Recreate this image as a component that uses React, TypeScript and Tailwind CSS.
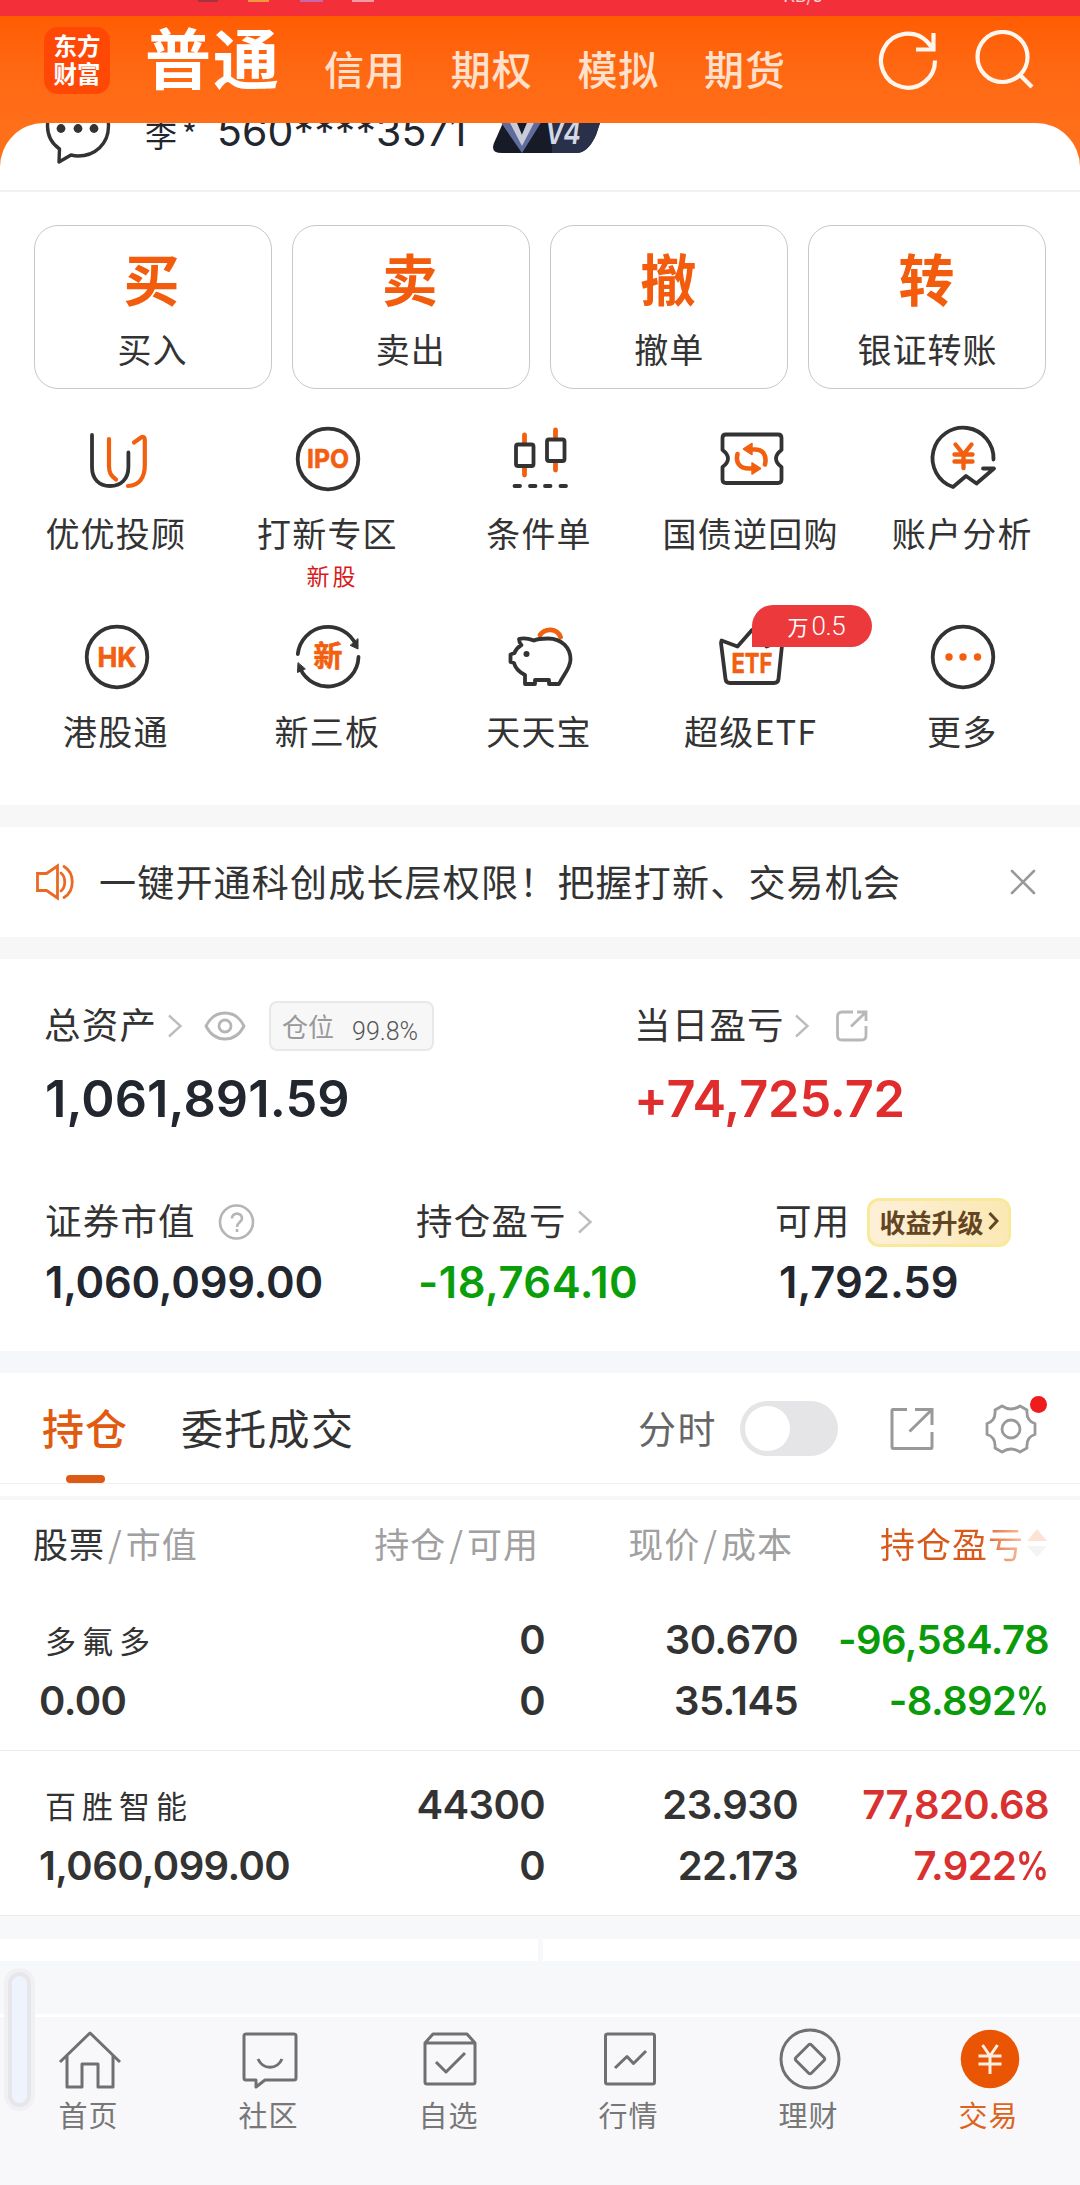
import type { ReactNode } from "react";

const DARK = "#333333";
const ORANGE = "#f2600f";

type childrenProps = {
  children: ReactNode;
};

const MenuIcon = ({ children }: childrenProps) => (
  <svg
    width="72"
    height="72"
    viewBox="0 0 72 72"
    fill="none"
    stroke={DARK}
    strokeWidth="3.8"
    strokeLinecap="round"
    strokeLinejoin="round"
  >
    {children}
  </svg>
);

type iconTextProps = {
  y: number;
  size: number;
  width: number;
  value: string;
};

const IconText = ({ y, size, width, value }: iconTextProps) => (
  <text
    x="36"
    y={y}
    fontSize={size}
    fontWeight="700"
    textAnchor="middle"
    textLength={width}
    lengthAdjust="spacingAndGlyphs"
    fill={ORANGE}
    stroke={ORANGE}
    strokeWidth="0.6"
    fontFamily="Inter, 'Noto Sans CJK SC', sans-serif"
  >
    {value}
  </text>
);

const menuItems = [
  {
    label: "优优投顾",
    icon: (
      <MenuIcon>
        <path d="M11 12V44C11 56 18 63 29 63S47.400 56 47.400 44V29.500" />
        <path d="M28 16V43C28 50 30 53 35 56.500" stroke={ORANGE} strokeWidth="4.2" />
        <path
          d="M53 19.500L60 14.500C62 13.300 63.800 14 63.800 17V42C63.800 55 58 62.500 47 63"
          stroke={ORANGE}
          strokeWidth="4.2"
        />
      </MenuIcon>
    ),
  },
  {
    label: "打新专区",
    note: "新股",
    icon: (
      <MenuIcon>
        <circle cx="36" cy="36" r="30.300" />
        <IconText y={45} size={26} width={42} value="IPO" />
      </MenuIcon>
    ),
  },
  {
    label: "条件单",
    icon: (
      <MenuIcon>
        <g stroke={ORANGE} strokeWidth="4.8">
          <path d="M20.500 12V20M20.500 45V52M51.500 7V14M51.500 40V47" />
        </g>
        <rect x="12" y="21.500" width="17.500" height="21.500" rx="2" />
        <rect x="43" y="16.500" width="17.500" height="21.500" rx="2" />
        <path d="M10.500 63H16M26 63H31.500M41 63H46.500M56.500 63H62" />
      </MenuIcon>
    ),
  },
  {
    label: "国债逆回购",
    icon: (
      <MenuIcon>
        <path d="M10 11.500H62Q65.500 11.500 65.500 15V27Q60 31 60 35.500T65.500 44V56.500Q65.500 60 62 60H10Q6.500 60 6.500 56.500V44Q12 40 12 35.500T6.500 27V15Q6.500 11.500 10 11.500Z" />
        <g stroke={ORANGE} strokeWidth="4.6">
          <path d="M34 26.500H39C47 26.500 51 32 49 41.500" />
          <path d="M38 45.500H33C23 45.500 19.500 39 21.500 31" />
        </g>
        <path d="M27.500 26L36 20.500V31.500Z" fill={ORANGE} stroke={ORANGE} strokeWidth="1.5" />
        <path d="M44.500 45.500L36 40V51Z" fill={ORANGE} stroke={ORANGE} strokeWidth="1.5" />
      </MenuIcon>
    ),
  },
  {
    label: "账户分析",
    icon: (
      <MenuIcon>
        <path d="M66.500 36.500A30.500 30.500 0 1 0 26 64L39 53L49.500 60.500L67 45.500H56" />
        <path
          d="M28.500 21.500L36.500 31.500L44.500 21.500M36.500 31.500V45M27.500 31.500H45.500M27.500 38.500H45.500"
          stroke={ORANGE}
          strokeWidth="4.4"
        />
      </MenuIcon>
    ),
  },
  {
    label: "港股通",
    icon: (
      <MenuIcon>
        <circle cx="36" cy="36" r="30.300" />
        <IconText y={46} size={27} width={39} value="HK" />
      </MenuIcon>
    ),
  },
  {
    label: "新三板",
    icon: (
      <MenuIcon>
        <path d="M5.800 33A30.500 30.500 0 0 1 64 24" />
        <path d="M66.500 36A30.500 30.500 0 0 1 8 47" />
        <path d="M66 18V28L58.500 24.500Z" fill={DARK} strokeWidth="1" />
        <path d="M6 42L5.500 51.500L13 48Z" fill={DARK} strokeWidth="1" />
        <IconText y={46} size={29} width={29} value="新" />
      </MenuIcon>
    ),
  },
  {
    label: "天天宝",
    icon: (
      <MenuIcon>
        <path d="M36 14C41 7 53 6.500 56.500 16" stroke={ORANGE} strokeWidth="4.800" />
        <path
          d="M15 18C21 16 26 18 30 19.500C33 18 36 17.500 44 17.500C58 17.500 66.500 27 66.500 38.500C66.500 47 60 53 55 63H45V59H31V63H21V54C15 51 11 46 10 42L6.500 41V33.500L10.500 32C12 28 14 26 17.500 24C15.500 22 15 20 15 18Z"
          fill="white"
        />
        <circle cx="22.500" cy="33" r="3" fill={DARK} stroke="none" />
      </MenuIcon>
    ),
  },
  {
    label: "超级ETF",
    badge: "0.5",
    icon: (
      <MenuIcon>
        <path d="M5.500 19.500L21.500 25.500L36 9L50.500 25.500L66.500 19.500L62.500 58Q62 62 58 62H14Q10 62 9.500 58L5 22Z" />
        <IconText y={51.500} size={27} width={41} value="ETF" />
      </MenuIcon>
    ),
  },
  {
    label: "更多",
    icon: (
      <MenuIcon>
        <circle cx="36" cy="36" r="30.300" />
        <g fill={ORANGE} stroke="none">
          <circle cx="22" cy="36" r="3.700" />
          <circle cx="36" cy="36" r="3.700" />
          <circle cx="50.500" cy="36" r="3.700" />
        </g>
      </MenuIcon>
    ),
  },
];

const tradeButtons = [
  { mark: "买", label: "买入" },
  { mark: "卖", label: "卖出" },
  { mark: "撤", label: "撤单" },
  { mark: "转", label: "银证转账" },
];

const positions = [
  {
    name: "多氟多",
    value: "0.00",
    hold: "0",
    usable: "0",
    price: "30.670",
    cost: "35.145",
    profit: "-96,584.78",
    rate: "-8.892%",
    color: "text-[#0a9b0a]",
  },
  {
    name: "百胜智能",
    value: "1,060,099.00",
    hold: "44300",
    usable: "0",
    price: "23.930",
    cost: "22.173",
    profit: "77,820.68",
    rate: "7.922%",
    color: "text-[#d93030]",
  },
];

const Chevron = () => (
  <svg width="16" height="26" viewBox="0 0 16 26" fill="none" stroke="#bdbdbd" strokeWidth="2.4">
    <path d="M1 2.500L12.500 13L1 23.500" />
  </svg>
);

const Header = () => (
  <>
    {/* status bar */}
    <div className="flex h-4 items-start overflow-hidden bg-[#f3303a]">
      <div className="ml-[198px] h-[2px] w-[20px] bg-[#a8323c]" />
      <div className="ml-[30px] h-[2px] w-[21px] bg-[#f09a3c]" />
      <div className="ml-[31px] h-[2px] w-[23px] bg-[#c768a8]" />
      <div className="ml-[29px] h-[2px] w-[22px] bg-[#f59aa8]" />
      <span className="-mt-[16px] ml-[409px] text-[18px] leading-5 text-white/80">KB/s</span>
    </div>
    <div className="flex h-[107px] bg-linear-to-b from-[#ff5c02] via-[#ff6812] to-[#ff6e19]">
      <div className="mt-[11px] ml-11 w-[66px] rounded-[14px] bg-[#ff4806] pt-[4px] text-center text-[23.500px] leading-[28px] font-bold text-white h-[67px]">
        东方
        <br />
        财富
      </div>
      <span className="mt-[4px] ml-[35px] w-[179px] text-[66px] leading-[70px] font-bold tracking-[2px] text-white">
        普通
      </span>
      {["信用", "期权", "模拟", "期货"].map((tab) => (
        <span
          key={tab}
          className="mt-[27px] w-[126.700px] text-[40px] leading-[50px] font-medium tracking-[1px] text-[#ffe0cc]"
        >
          {tab}
        </span>
      ))}
      <svg
        className="mt-[13px] ml-[47px]"
        width="62"
        height="62"
        viewBox="0 0 62 62"
        fill="none"
        stroke="#fff6ee"
        strokeWidth="4.2"
      >
        <path d="M57 31.500A27 27 0 1 1 49 12.500L55.500 20" />
        <path d="M55.500 4V20.500H38" />
      </svg>
      <svg
        className="mt-[14px] ml-[35px]"
        width="62"
        height="62"
        viewBox="0 0 62 62"
        fill="none"
        stroke="#fff6ee"
        strokeWidth="4.2"
      >
        <circle cx="27.500" cy="27" r="25" />
        <path d="M45 45L57 57" />
      </svg>
    </div>
  </>
);

const Account = () => (
  <div className="bg-[#ff6e19]">
    <div className="flex h-[69px] overflow-hidden rounded-t-[44px] border-b-2 border-[#f1f1f3] bg-white">
      <svg
        className="-mt-[31px] ml-11"
        width="68"
        height="76"
        viewBox="0 0 68 76"
        fill="none"
        stroke={DARK}
        strokeWidth="3.4"
        strokeLinejoin="round"
      >
        <path d="M15.500 57C7 51 3.500 43 3.500 34C3.500 16 17 4 34 4S64.500 16 64.500 34S51 64 34 64C31 64 29 63.500 27 63L15 70Z" />
        <g fill={DARK} stroke="none">
          <circle cx="17" cy="36.500" r="4.400" />
          <circle cx="34" cy="36.500" r="4.400" />
          <circle cx="50" cy="36.500" r="4.400" />
        </g>
      </svg>
      <span className="-mt-[15px] ml-[33px] w-[72px] text-[32px] leading-[50px] tracking-[5px] text-[#22262e]">
        李*
      </span>
      <span className="-mt-[17px] w-[275px] font-['Inter',sans-serif] text-[41px] leading-[50px] tracking-[0.100px] text-[#22262e]">
        560****3571
      </span>
      <svg className="-mt-[20px]" width="112" height="52" viewBox="0 0 112 52">
        <path d="M18 4H106Q113 4 110 14L104 32Q96 50 84 50H10Q-2 50 2 40Z" fill="#171b28" />
        <path d="M60 4H106Q113 4 110 14L104 32Q96 50 84 50H60Z" fill="#28304a" />
        <path d="M8 18L20 14L29 33L38 14L50 18L30 50Z" fill="#5f6c9c" />
        <path d="M16 16L23 15L30 32L37 15L44 16L30 43Z" fill="#c9cbd8" />
        <text
          x="53"
          y="41"
          fontSize="32"
          fontWeight="600"
          fontStyle="italic"
          fill="#d3d8e6"
          fontFamily="Inter, sans-serif"
          textLength="36"
          lengthAdjust="spacingAndGlyphs"
        >
          V4
        </text>
      </svg>
    </div>
  </div>
);

const Menu = () => (
  <section className="h-[613px] pt-[33px]">
    <div className="flex justify-between px-[33.500px]">
      {tradeButtons.map((item) => (
        <div
          key={item.label}
          className="flex h-[164px] w-[238px] flex-col items-center rounded-[24px] border-[1.500px] border-[#c8c8c8] pt-[21px]"
        >
          <span className="-ml-[2px] text-[56px] leading-[60px] font-bold text-[#f25c0c]">{item.mark}</span>
          <span className="mt-[22px] text-[34px] leading-[40px] tracking-[1px] text-[#333]">{item.label}</span>
        </div>
      ))}
    </div>
    <div className="mt-[34px] grid grid-cols-5 px-[11px]">
      {menuItems.map((item) => (
        <div key={item.label} className="relative flex h-[197.500px] flex-col items-center">
          {item.icon}
          <span className="mt-[18px] -ml-[2px] text-[34px] leading-[40px] tracking-[1.200px] whitespace-nowrap text-[#333]">
            {item.label}
          </span>
          {item.note && (
            <span className="mt-[6px] pl-2 text-[23px] leading-[32px] tracking-[3px] text-[#d91a1a]">
              {item.note}
            </span>
          )}
          {item.badge && (
            <span className="absolute -top-4 left-1/2 flex h-[42px] w-[120px] items-center rounded-[21px] rounded-bl-none bg-[#ec3a3c] pt-[2px] pl-9 text-[21px] text-white">
              万
              <span className="ml-[3px] font-['Roboto',sans-serif] text-[26px] font-light tracking-[-0.500px]">
                {item.badge}
              </span>
            </span>
          )}
        </div>
      ))}
    </div>
  </section>
);

const Notice = () => (
  <section className="flex h-[154px] items-center border-y-[22px] border-[#f7f7f7] pl-[35px]">
    <svg width="42" height="38" viewBox="0 0 42 38" fill="none" stroke="#ea6a24" strokeWidth="2.8">
      <path d="M2.500 10.500H11.500L22.500 3V35L11.500 27.500H2.500Z" />
      <path d="M26 10C31 14 31 24 26 28M29 3.500C40 10 40 28 29 34.500" strokeLinecap="round" />
    </svg>
    <span className="mb-[3px] ml-[22px] w-[911px] text-[37px] leading-[50px] tracking-[1.200px] text-[#333]">
      一键开通科创成长层权限！把握打新、交易机会
    </span>
    <svg width="26" height="26" viewBox="0 0 26 26" stroke="#999" strokeWidth="2.6" strokeLinecap="round">
      <path d="M2 2L24 24M24 2L2 24" />
    </svg>
  </section>
);

const Assets = () => (
  <section className="h-[392px] pt-[42px] text-[36.500px] tracking-[1.200px] text-[#333]">
    <div className="flex h-[50px] items-center pl-[44px]">
      <span className="mb-[4px] w-[124px]">总资产</span>
      <Chevron />
      <svg
        className="ml-5"
        width="42"
        height="30"
        viewBox="0 0 42 30"
        fill="none"
        stroke="#b5b5b5"
        strokeWidth="2.8"
      >
        <path d="M2 15C6 7 13 2 21 2S36 7 40 15C36 23 29 28 21 28S6 23 2 15Z" />
        <circle cx="21" cy="15" r="6" />
      </svg>
      <div className="ml-[23px] flex h-[50px] w-[165px] items-center rounded-lg border-2 border-[#e8e8e8] bg-[#f7f7f7] pl-[11px]">
        <span className="mb-[2px] text-[26px] tracking-normal text-[#999]">仓位</span>
        <span className="mt-[11px] ml-[18px] font-['Roboto',sans-serif] text-[25px] font-light tracking-normal text-[#555]">
          99.8%
        </span>
      </div>
      <span className="mb-[4px] ml-[200px] w-[161px]">当日盈亏</span>
      <Chevron />
      <svg
        className="ml-[24px]"
        width="34"
        height="34"
        viewBox="0 0 34 34"
        fill="none"
        stroke="#b8b8b8"
        strokeWidth="2.8"
      >
        <path d="M18 3H7Q2.500 3 2.500 7.500V26.500Q2.500 31 7 31H26.500Q31 31 31 26.500V17" />
        <path d="M22 3H31V12M31 3L16 17.500" />
      </svg>
    </div>
    <div className="mt-[18px] flex pl-[45px] font-['Inter',sans-serif] text-[50.500px] leading-[60px] font-semibold tracking-[0.100px] text-[#22262e]">
      <span className="w-[589px]">1,061,891.59</span>
      <span className="tracking-[-0.150px] text-[#df2c2c]">+74,725.72</span>
    </div>
    <div className="mt-[68px] flex h-[50px] items-center pl-[45px]">
      <span className="mb-[4px] w-[173px]">证券市值</span>
      <svg width="38" height="38" viewBox="0 0 38 38" fill="none" stroke="#b5b5b5" strokeWidth="2.6">
        <circle cx="18.500" cy="19" r="16.500" />
        <path d="M14 15.500C14 9 24 9 24 15.500C24 19 19 19 19 24M19 26V29" />
      </svg>
      <span className="mb-[4px] ml-[160px] w-[162px]">持仓盈亏</span>
      <Chevron />
      <span className="mb-[4px] ml-[181px] w-[92px]">可用</span>
      <div className="flex h-[49px] w-[144px] items-center justify-center gap-1 rounded-xl border-[3px] border-[#f8ea9a] bg-linear-to-r from-[#fdf0d8] to-[#fbe8b4] pb-[2px] text-[26px] font-bold tracking-normal text-[#644522]">
        收益升级
        <svg width="11" height="20" viewBox="0 0 11 20" fill="none" stroke="#644522" strokeWidth="3">
          <path d="M1.500 2L9 10L1.500 18" />
        </svg>
      </div>
    </div>
    <div className="mt-[9px] flex pl-[45px] font-['Inter',sans-serif] text-[43.500px] leading-[52px] font-semibold tracking-[0px] text-[#22262e]">
      <span className="w-[373px] tracking-[-0.250px]">1,060,099.00</span>
      <span className="w-[361px] tracking-[0.500px] text-[#0a9f0a]">-18,764.10</span>
      <span>1,792.59</span>
    </div>
  </section>
);

const Tabs = () => (
  <div className="flex h-[133px] border-t-[22px] border-b border-[#f6f7fa] border-b-[#efefef]">
    <div className="ml-[42px] flex flex-col items-center">
      <span className="mt-[29px] text-[42px] leading-[50px] font-medium tracking-[1px] text-[#e05a10]">持仓</span>
      <div className="mt-[23px] h-2 w-[39px] rounded-full bg-[#dd5a14]" />
    </div>
    <span className="mt-[29px] ml-[53px] w-[457px] text-[42px] leading-[50px] tracking-[1.300px] text-[#333]">
      委托成交
    </span>
    <span className="mt-[29px] w-[102px] text-[38px] leading-[50px] tracking-[1.500px] text-[#666]">分时</span>
    <div className="mt-7 h-[55px] w-[98px] rounded-full bg-[#e5e5e7] p-[5px]">
      <div className="h-[45px] w-[45px] rounded-full bg-white" />
    </div>
    <svg
      className="mt-[34px] ml-[51px]"
      width="46"
      height="44"
      viewBox="0 0 46 44"
      fill="none"
      stroke="#999"
      strokeWidth="3"
    >
      <path d="M18 2.500H4Q3 2.500 3 3.500V40Q3 41.500 4.500 41.500H42Q43 41.500 43 40V25" />
      <path d="M26 2.500H43V18M43 2.500L20.500 24.500" />
    </svg>
    <div className="relative mt-[30px] ml-[50px] h-[52px] w-[52px]">
      <svg width="52" height="52" viewBox="0 0 52 52" fill="none" stroke="#999" strokeWidth="2.8">
        <path
          d="M17 3Q26 9 35 3L42 7Q41 18 50 20.500V31.500Q41 34 42 45L35 49Q26 43 17 49L10 45Q11 34 2 31.500V20.500Q11 18 10 7Z"
          strokeLinejoin="round"
        />
        <circle cx="26" cy="26" r="9" />
      </svg>
      <div className="absolute -top-[7px] right-[-10px] h-[17px] w-[17px] rounded-full bg-[#ee1c1c]" />
    </div>
  </div>
);

const Positions = () => (
  <section>
    <div className="mt-3 h-1 bg-[#f5f7f8]" />
    <div className="grid h-[86px] grid-cols-[300px_239px_254px_255px] items-center text-right text-[35px] tracking-[1px] text-[#a0a0a0]">
      <span className="pl-[33px] text-left">
        <span className="text-[#333]">股票</span>
        <span className="mx-[3px]">/</span>市值
      </span>
      <span>
        持仓<span className="mx-[3px]">/</span>可用
      </span>
      <span>
        现价<span className="mx-[3px]">/</span>成本
      </span>
      <span className="flex items-center justify-end">
        <span className="bg-linear-to-r from-[#d9591a] from-70% to-[#f8c3a2] bg-clip-text text-transparent">
          持仓盈亏
        </span>
        <svg className="ml-[2px]" width="22" height="30" viewBox="0 0 22 30">
          <path d="M1 13L11 1L21 13Z" fill="#fde3d6" />
          <path d="M1 18H21L11 29Z" fill="#f4f4f4" />
        </svg>
      </span>
    </div>
    {positions.map((item) => (
      <div
        key={item.name}
        className="grid h-[165px] grid-cols-[300px_245px_253px_251px] gap-y-[13px] border-b border-[#ececec] pb-[25px] text-right font-['Inter','Noto_Sans_CJK_SC',sans-serif] text-[40px] leading-[48px] font-semibold tracking-[-0.600px] text-[#333] [align-content:end]"
      >
        <span className="pl-[45px] text-left font-['Noto_Sans_CJK_SC',sans-serif] text-[31px] font-normal tracking-[6px]">
          {item.name}
        </span>
        <span>{item.hold}</span>
        <span>{item.price}</span>
        <span className={item.color}>{item.profit}</span>
        <span className="pl-[39px] text-left">{item.value}</span>
        <span>{item.usable}</span>
        <span>{item.cost}</span>
        <span className={item.color}>
          {item.rate.slice(0, -1)}
          <span className="inline-block origin-right -ml-[7px] scale-x-[0.82]">%</span>
        </span>
      </div>
    ))}
  </section>
);

const navItems = [
  {
    label: "首页",
    icon: <path d="M2 34L32 5L62 34M9 28V59H24V36H40V59H55V28" />,
  },
  {
    label: "社区",
    icon: (
      <>
        <path d="M8 6H56Q58 6 58 8V50Q58 52 56 52H27L18 59V52H8Q6 52 6 50V8Q6 6 8 6Z" />
        <path d="M20 31C25 42 39 42 44 31" />
      </>
    ),
  },
  {
    label: "自选",
    icon: (
      <>
        <path d="M7 15L15 6H49L57 15V54Q57 56 55 56H9Q7 56 7 54ZM7 15H57" />
        <path d="M18 34L28 44L47 25" />
      </>
    ),
  },
  {
    label: "行情",
    icon: (
      <>
        <rect x="7.500" y="6" width="49" height="50" rx="2" />
        <path d="M17 40L29 28.500L35.500 35.500L48 23" />
      </>
    ),
  },
  {
    label: "理财",
    icon: (
      <>
        <circle cx="32" cy="31" r="29" />
        <path d="M30.500 17L18 29.500Q16.500 31 18 32.500L30.500 45Q32 46.500 33.500 45L46 32.500Q47.500 31 46 29.500L33.500 17Q32 15.500 30.500 17Z" />
      </>
    ),
  },
  {
    label: "交易",
    active: true,
    icon: (
      <>
        <circle cx="32" cy="31" r="29.300" fill="#ea5504" stroke="none" />
        <path d="M24.500 17L32 28L39.500 17M32 28V46M20.500 28H43.500M20.500 36H43.500" stroke="#ffefe2" />
      </>
    ),
  },
];

const BottomNav = () => (
  <nav className="grid h-[171px] grid-cols-6 border-t-[3px] border-white bg-[#f8f8fa]">
    {navItems.map((item) => (
      <div key={item.label} className="flex flex-col items-center pt-[11px]">
        <svg
          width="64"
          height="64"
          viewBox="0 0 64 64"
          fill="none"
          stroke="#707070"
          strokeWidth="3"
          strokeLinejoin="round"
        >
          {item.icon}
        </svg>
        <span
          className={
            item.active
              ? "mt-[2px] -ml-[3px] text-[29px] leading-[40px] tracking-[1px] text-[#dd6420]"
              : "mt-[2px] -ml-[3px] text-[29px] leading-[40px] tracking-[1px] text-[#777]"
          }
        >
          {item.label}
        </span>
      </div>
    ))}
  </nav>
);

const App = () => {
  return (
    <div className="relative h-[2185px] w-[1080px] overflow-hidden bg-white font-['Noto_Sans_CJK_SC',sans-serif]">
      <Header />
      <Account />
      <Menu />
      <Notice />
      <Assets />
      <Tabs />
      <Positions />
      <div className="flex h-[98px] justify-between bg-[#f7f8fa] pt-[23px]">
        <div className="h-[22px] w-[538px] bg-white" />
        <div className="h-[22px] w-[537px] bg-white" />
      </div>
      <BottomNav />
      {/* edge gesture handle */}
      <div className="absolute top-[1972px] left-2 h-[135px] w-[23px] rounded-full border-4 border-[#e6e7ea] bg-[#eff3fc] shadow-[0_0_0_4px_#f1f1f4]" />
    </div>
  );
};

export default App;
